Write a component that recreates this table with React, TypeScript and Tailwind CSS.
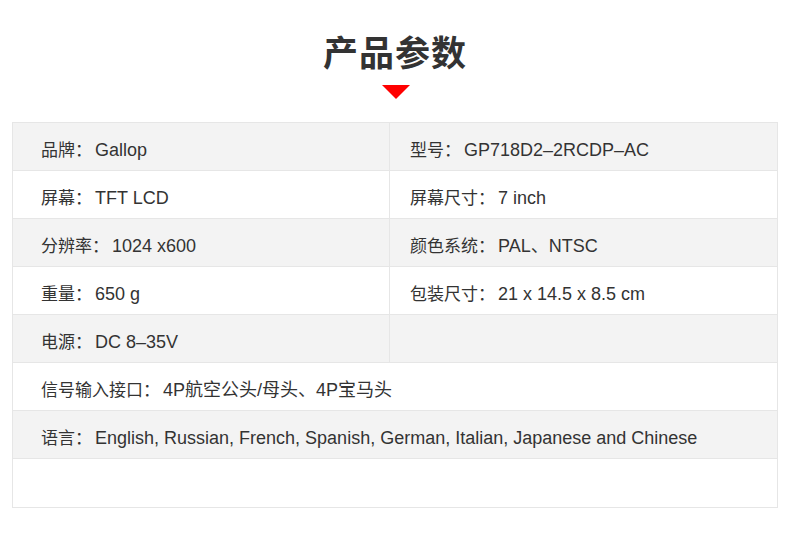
type Cell = [string, string];

const pairs: [Cell, Cell | null][] = [
  [["品牌：", "Gallop"], ["型号：", "GP718D2–2RCDP–AC"]],
  [["屏幕：", "TFT LCD"], ["屏幕尺寸：", "7 inch"]],
  [["分辨率：", "1024 x600"], ["颜色系统：", "PAL、NTSC"]],
  [["重量：", "650 g"], ["包装尺寸：", "21 x 14.5 x 8.5 cm"]],
  [["电源：", "DC 8–35V"], null],
];

const wide: (Cell | null)[] = [
  ["信号输入接口：", "4P航空公头/母头、4P宝马头"],
  ["语言：", "English, Russian, French, Spanish, German, Italian, Japanese and Chinese"],
  null,
];

function Spec({ cell }: { cell: Cell | null }) {
  if (!cell) return null;
  return (
    <span className="whitespace-nowrap">
      <span className="text-[17px]">{cell[0]}</span>
      <span className="ml-[3px] text-[18px]">{cell[1]}</span>
    </span>
  );
}

export default function App() {
  return (
    <div
      className="h-[547px] w-[790px] bg-white text-[#333]"
      style={{ fontFamily: '"Liberation Sans", "Noto Sans CJK SC", sans-serif' }}
    >
      <div className="flex flex-col items-center pt-[34px]">
        <h1 className="text-[35px] font-bold leading-[40px] tracking-[1px] text-[#333]">产品参数</h1>
        <div className="ml-[1px] mt-[11px] h-0 w-0 border-x-[14px] border-t-[14px] border-x-transparent border-t-[#ff0000]" />
      </div>

      <div className="mx-[12px] mt-[23px] border border-[#e6e6e6]">
        {pairs.map(([a, b], i) => (
          <div
            key={i}
            className={`grid h-[48px] grid-cols-[377px_1fr] border-b border-[#e6e6e6] ${i % 2 === 0 ? "bg-[#f3f3f3]" : "bg-white"}`}
          >
            <div className="flex items-center border-r border-[#e6e6e6] pl-[28px] pt-[7px]">
              <Spec cell={a} />
            </div>
            <div className="flex items-center pl-[20px] pt-[7px]">
              <Spec cell={b} />
            </div>
          </div>
        ))}
        {wide.map((c, i) => (
          <div
            key={i}
            className={`flex items-center pl-[28px] pt-[7px] ${i === 2 ? "h-[48px]" : "h-[48px] border-b border-[#e6e6e6]"} ${i % 2 === 1 ? "bg-[#f3f3f3]" : "bg-white"}`}
          >
            <Spec cell={c} />
          </div>
        ))}
      </div>
    </div>
  );
}
